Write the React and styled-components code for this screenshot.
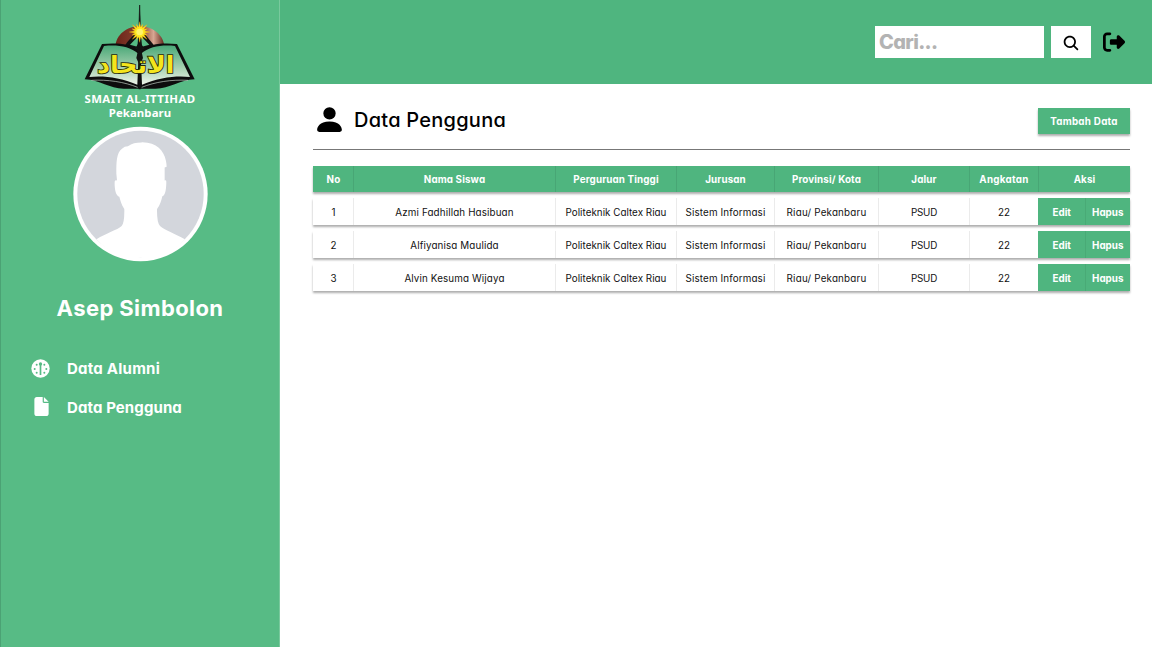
import React from 'react';
import styled, { createGlobalStyle } from 'styled-components';
import { BsPersonFill } from 'react-icons/bs';
import { IoSearch } from 'react-icons/io5';
import { FaRightFromBracket, FaFile } from 'react-icons/fa6';

const GlobalStyle = createGlobalStyle`
  * { box-sizing: border-box; }
  body { margin: 0; background: #fff; }
  button, input { font: inherit; border: 0; border-radius: 0; margin: 0; padding: 0; }
`;

const Page = styled.div`
  display: flex;
  width: 1152px;
  height: 647px;
  overflow: hidden;
  font-family: Inter, 'Open Sans', sans-serif;
  font-feature-settings: 'cv11';
  color: #000;
`;

const Sidebar = styled.aside`
  display: flex;
  flex-direction: column;
  align-items: center;
  flex: 0 0 280px;
  background: #57bb85;
  border-left: 1px solid #4ba274;
  border-right: 1px solid #79c99d;
`;

const LogoMark = styled.svg`
  display: block;
  flex: none;
  width: 140px;
  height: 91px;
  margin-bottom: 0.6px;
`;

const School = styled.div`
  font: 700 11.4px/14px 'Noto Sans', sans-serif;
  letter-spacing: ${(p) => p.$spacing || 0}px;
  color: #fff;
  white-space: nowrap;
`;

const Avatar = styled.svg`
  display: block;
  flex: none;
  width: 135px;
  height: 136px;
  margin: 6.4px 0 0 1px;
`;

const UserName = styled.h2`
  margin: 30px 0 0;
  font-size: 22px;
  line-height: 32px;
  font-weight: 700;
  letter-spacing: 0.4px;
  color: #fff;
`;

const Nav = styled.nav`
  display: flex;
  flex-direction: column;
  align-self: stretch;
  margin-top: 25px;
  padding-left: 29px;
`;

const NavItem = styled.a`
  display: flex;
  align-items: center;
  height: 39px;
  color: #fff;
  font-size: 15px;
  font-weight: 700;
  letter-spacing: ${(p) => p.$spacing}px;
`;

const NavIcon = styled.span`
  display: flex;
  justify-content: center;
  width: 20px;
  margin-right: 17px;
  padding: 0 0 ${(p) => p.$raise || 0}px ${(p) => p.$shift || 0}px;
`;

const Main = styled.main`
  flex: 1;
  display: flex;
  flex-direction: column;
`;

const TopBar = styled.header`
  display: flex;
  justify-content: flex-end;
  align-items: flex-start;
  height: 84px;
  padding: 26px 27px 0 0;
  background: #4fb57f;
`;

const SearchInput = styled.input`
  width: 169px;
  height: 32px;
  padding: 0 4px;
  background: #fff;
  font-size: 20px;
  font-weight: 800;
  letter-spacing: -0.65px;
  outline: none;
  &::placeholder { color: #b3b3b3; opacity: 1; }
`;

const SearchButton = styled.button`
  display: flex;
  align-items: center;
  justify-content: center;
  width: 40px;
  height: 32px;
  margin-left: 7px;
  padding-top: 1px;
  background: #fff;
  color: #000;
`;

const LogoutButton = styled.button`
  display: flex;
  align-items: center;
  height: 32px;
  margin-left: 12px;
  background: none;
  color: #000;
`;

const Content = styled.section`
  padding: 21px 22px 0 33px;
`;

const TitleRow = styled.div`
  display: flex;
  align-items: center;
  height: 30px;
`;

const PersonIcon = styled(BsPersonFill)`
  margin-bottom: 1px;
`;

const Title = styled.h1`
  flex: 1;
  margin: 0 0 0 8px;
  font-size: 20px;
  line-height: 30px;
  font-weight: 500;
  letter-spacing: 0.25px;
`;

const AddButton = styled.button`
  width: 92px;
  height: 26px;
  margin-top: 2px;
  background: #4fb57f;
  color: #fff;
  font-size: 9.8px;
  font-weight: 700;
  letter-spacing: 0.28px;
  box-shadow: 0 1.5px 2px rgba(0, 0, 0, 0.32);
`;

const Divider = styled.hr`
  height: 1px;
  margin: 14px 0 15.5px;
  border: 0;
  background: #777;
`;

const Table = styled.div`
  display: flex;
  flex-direction: column;
  gap: 6.2px;
`;

const Row = styled.div`
  display: grid;
  grid-template-columns: 40px 202px 121px 98px 104px 91px 69px 46.5px 1fr;
  height: 26.8px;
  background: ${(p) => (p.$head ? '#4fb57f' : '#fff')};
  color: ${(p) => (p.$head ? '#fff' : '#111')};
  box-shadow: 0 1.5px 2px rgba(0, 0, 0, 0.32);
`;

const Cell = styled.div`
  display: flex;
  align-items: center;
  justify-content: center;
  grid-column: span ${(p) => p.$span || 1};
  border-left: ${(p) => (p.$first ? '0' : '1px solid rgba(0, 0, 0, 0.08)')};
  padding: 1px 0 0 ${(p) => (p.$first ? 1 : 0)}px;
  font-size: 9.8px;
  font-weight: ${(p) => (p.$bold ? 700 : 400)};
  letter-spacing: ${(p) => p.$spacing ?? 0.14}px;
  white-space: nowrap;
`;

const ActionButton = styled.button`
  padding: 1px 0 0 ${(p) => (p.$divided ? 0 : 1)}px;
  background: #4fb57f;
  color: #fff;
  font-size: 9.8px;
  font-weight: 700;
  border-left: ${(p) => (p.$divided ? '1px solid #49aa76' : '0')};
`;

const columns = [
  { label: 'No' },
  { label: 'Nama Siswa' },
  { label: 'Perguruan Tinggi' },
  { label: 'Jurusan' },
  { label: 'Provinsi/ Kota' },
  { label: 'Jalur' },
  { label: 'Angkatan', spacing: 0.3 },
  { label: 'Aksi', span: 2 },
];

const students = ['Azmi Fadhillah Hasibuan', 'Alfiyanisa Maulida', 'Alvin Kesuma Wijaya'];

function SchoolLogo() {
  const rays = Array.from({ length: 16 }, (_, i) => {
    const a = (i * Math.PI) / 8;
    const b = a + Math.PI / 16;
    const r = i % 2 ? 25 : 31;
    return `${209 + r * Math.cos(a)},${96 + r * Math.sin(a)} ${209 + 15 * Math.cos(b)},${96 + 15 * Math.sin(b)}`;
  }).join(' ');
  return (
    <LogoMark viewBox="0 0 420 273" aria-label="Al-Ittihad">
      <defs>
        <linearGradient id="dome" x1="0" x2="1">
          <stop offset="0" stopColor="#6b2418" />
          <stop offset="0.55" stopColor="#8d4534" />
          <stop offset="0.78" stopColor="#d8a793" />
          <stop offset="1" stopColor="#5c2218" />
        </linearGradient>
        <linearGradient id="leaf" x1="0" y1="0" x2="0" y2="1">
          <stop offset="0" stopColor="#4aa878" />
          <stop offset="0.55" stopColor="#a3cfae" />
          <stop offset="1" stopColor="#eef5ea" />
        </linearGradient>
      </defs>
      <path d="M136 140 C138 104 170 79 209 79 C248 79 280 104 283 140 Z" fill="url(#dome)" />
      <path d="M209 84 L244 126 L260 146 L158 146 L172 126 Z" fill="#111" />
      <path d="M205 108 L202 140 L180 134 Z M213 108 L216 140 L238 134 Z" fill="#57bb85" />
      <path d="M209 15 L211 70 L210 100 L207 70 Z" fill="#111" stroke="#111" strokeWidth="2" />
      <path d="M96 132 L44 238 C92 240 120 268 166 266 L252 266 C298 268 326 240 374 238 L321 132 C282 128 240 130 209 152 C180 130 138 128 96 132 Z" fill="#0d0d0d" />
      <path d="M102 138 L58 231 C98 226 150 232 202 254 L206 162 C178 138 140 134 102 138 Z" fill="url(#leaf)" />
      <path d="M315 138 L360 231 C320 226 268 232 216 254 L212 162 C240 138 278 134 315 138 Z" fill="url(#leaf)" />
      <path d="M64 241 C112 238 164 246 203 262 M354 241 C306 238 254 246 215 262" fill="none" stroke="#c9d8cb" strokeWidth="2" />
      <path d="M206 96 L212 96 L214 132 L220 142 L215 156 L219 174 L212 190 L212 268 L206 268 L206 190 L199 174 L203 156 L198 142 L204 132 Z" fill="#111" />
      <text x="197" y="218" textAnchor="middle" textLength="232" lengthAdjust="spacingAndGlyphs" direction="rtl" fontFamily="'DejaVu Sans', sans-serif" fontWeight="700" fontSize="72" fill="#f4e51d" stroke="#282b08" strokeWidth="5" paintOrder="stroke">الاتحاد</text>
      <polygon points={rays} fill="#ffe81c" stroke="#f3a21b" strokeWidth="1" />
      <circle cx="209" cy="96" r="10" fill="#fff36a" />
    </LogoMark>
  );
}

function ProfilePhoto() {
  return (
    <Avatar viewBox="0 0 408 408">
      <circle cx="204" cy="204" r="203" fill="#fff" />
      <circle cx="204" cy="204" r="191" fill="#d3d6dc" />
      <path
        fill="#fff"
        d="M71 341 C100 323 134 313 147 301 Q156 291 155 249 C146 237 143 222 140 212 C128 210 125 183 126 166 Q127 162 133 163 L131 142 C131 107 131 80 148 67 Q156 60 166 60 C178 51 190 48 207 48 C252 47 275 73 281 104 Q283 114 283 122 L277 124 L277 163 Q282 162 282 166 C282 185 280 208 270 211 C267 223 263 239 254 249 Q253 290 263 301 C276 313 309 325 338 341 Q290 398 204 396 Q120 398 71 341 Z"
      />
    </Avatar>
  );
}

function GaugeIcon() {
  return (
    <svg width="19" height="19" viewBox="0 0 57 57">
      <circle cx="28.500" cy="28.500" r="27.500" fill="#fff" />
      <g fill="#57bb85">
        <circle cx="17" cy="17" r="3" />
        <circle cx="40" cy="17" r="3" />
        <circle cx="11" cy="30" r="3" />
        <circle cx="46" cy="30" r="3" />
        <circle cx="17" cy="41" r="3" />
        <circle cx="40" cy="41" r="3" />
        <circle cx="28.500" cy="15" r="5" />
        <rect x="26" y="14" width="5" height="34" />
      </g>
    </svg>
  );
}

export default function App() {
  return (
    <Page>
      <GlobalStyle />
      <Sidebar>
        <SchoolLogo />
        <School $spacing={0.45}>SMAIT AL-ITTIHAD</School>
        <School $spacing={0.1}>Pekanbaru</School>
        <ProfilePhoto />
        <UserName>Asep Simbolon</UserName>
        <Nav>
          <NavItem $spacing={0.24}>
            <NavIcon><GaugeIcon /></NavIcon>
            Data Alumni
          </NavItem>
          <NavItem $spacing={0.1}>
            <NavIcon $shift={3} $raise={2}><FaFile size={19} /></NavIcon>
            Data Pengguna
          </NavItem>
        </Nav>
      </Sidebar>
      <Main>
        <TopBar>
          <SearchInput placeholder="Cari..." />
          <SearchButton aria-label="Cari"><IoSearch size={18} /></SearchButton>
          <LogoutButton aria-label="Keluar"><FaRightFromBracket size={22} /></LogoutButton>
        </TopBar>
        <Content>
          <TitleRow>
            <PersonIcon size={33} />
            <Title>Data Pengguna</Title>
            <AddButton>Tambah Data</AddButton>
          </TitleRow>
          <Divider />
          <Table>
            <Row $head>
              {columns.map((c, i) => (
                <Cell key={c.label} $bold $first={i === 0} $span={c.span} $spacing={c.spacing}>{c.label}</Cell>
              ))}
            </Row>
            {students.map((name, i) => (
              <Row key={name}>
                <Cell $first>{i + 1}</Cell>
                <Cell>{name}</Cell>
                <Cell $spacing={0.03}>Politeknik Caltex Riau</Cell>
                <Cell>Sistem Informasi</Cell>
                <Cell $spacing={0.2}>Riau/ Pekanbaru</Cell>
                <Cell $spacing={-0.2}>PSUD</Cell>
                <Cell>22</Cell>
                <ActionButton>Edit</ActionButton>
                <ActionButton $divided>Hapus</ActionButton>
              </Row>
            ))}
          </Table>
        </Content>
      </Main>
    </Page>
  );
}
